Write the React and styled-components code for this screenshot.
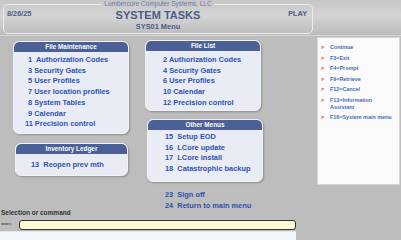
import React from "react";
import styled, { createGlobalStyle } from "styled-components";

const GlobalStyle = createGlobalStyle`
  html, body {
    margin: 0;
    padding: 0;
    background: #bdbdbd;
    font-family: "Liberation Sans", Arial, sans-serif;
  }
`;

const Page = styled.div`
  width: 401px;
  height: 240px;
  overflow: hidden;
  background: #bdbdbd;
  display: flex;
  flex-direction: column;
`;

const TopBand = styled.div`
  height: 36px;
  box-sizing: border-box;
  padding: 4px 88px 2px 3px;
  background: linear-gradient(#c6c6c6, #d4d4d4 45%, #bcbcbc);
  border-bottom: 1px solid #d6d6d6;
`;

const TitleBox = styled.div`
  height: 30px;
  box-sizing: border-box;
  border: 1px solid #ececec;
  border-radius: 5px;
  display: grid;
  grid-template-columns: 60px 1fr 60px;
  color: #4b5b8c;
`;

const DateText = styled.div`
  font-size: 7.3px;
  font-weight: bold;
  padding: 4px 0 0 3px;
`;

const PlayText = styled.div`
  font-size: 7.3px;
  font-weight: bold;
  text-align: right;
  padding: 4px 5px 0 0;
`;

const TitleCol = styled.div`
  display: flex;
  flex-direction: column;
  align-items: center;
`;

const Company = styled.div`
  font-size: 6.5px;
  line-height: 7px;
  margin-top: -5px;
  color: #6a78a8;
  background: linear-gradient(#c6c6c6, #cdcdcd);
  padding: 0 2px;
`;

const SysTitle = styled.div`
  font-size: 11px;
  font-weight: bold;
  line-height: 13px;
  margin-top: 2px;
`;

const SysSub = styled.div`
  font-size: 7.4px;
  font-weight: bold;
  line-height: 10px;
`;

const Main = styled.div`
  height: 172px;
  display: flex;
`;

const MenuArea = styled.div`
  width: 317px;
  display: grid;
  grid-template-columns: 116px 119px;
  column-gap: 16px;
  padding-left: 13px;
  box-sizing: border-box;
  align-items: start;
`;

const Column = styled.div`
  display: flex;
  flex-direction: column;
`;

const Panel = styled.div`
  margin-top: ${(p) => p.$top}px;
  margin-left: ${(p) => p.$left || 0}px;
  width: ${(p) => p.$width || 116}px;
  height: ${(p) => p.$height}px;
  box-sizing: border-box;
  background: #e9ecf4;
  border: 1px solid #f2f3f8;
  border-radius: 6px;
  box-shadow: 1px 1px 2px rgba(0, 0, 0, 0.25);
  overflow: hidden;
`;

const PanelHead = styled.div`
  height: 10px;
  background: #4a6096;
  color: #ffffff;
  font-size: 6.4px;
  font-weight: bold;
  text-align: center;
  line-height: 10px;
  border-radius: 5px 5px 0 0;
`;

const PanelBody = styled.div`
  padding: ${(p) => p.$pad || "3px 0 0 16px"};
  display: flex;
  flex-direction: column;
`;

const Item = styled.div`
  font-size: 7.4px;
  font-weight: bold;
  color: #2f52b2;
  line-height: 10.7px;
  white-space: pre;
  margin-left: ${(p) => p.$shift || 0}px;
`;

const Links = styled.div`
  margin: 8px 0 0 20px;
  display: flex;
  flex-direction: column;
`;

const Side = styled.div`
  margin-top: 1px;
  width: 83px;
  height: 148px;
  box-sizing: border-box;
  background: #fafafa;
  border: 1px solid #d6d6d6;
  padding: 6px 4px 0 3px;
  display: flex;
  flex-direction: column;
  gap: 3.5px;
`;

const KeyRow = styled.div`
  display: flex;
  font-size: 5.4px;
  font-weight: bold;
  color: #4a6bb8;
  line-height: 7px;
`;

const Arrow = styled.span`
  color: #d43030;
  width: 9px;
  flex: none;
`;

const Bottom = styled.div`
  display: flex;
  flex-direction: column;
`;

const Label = styled.div`
  font-size: 6.5px;
  font-weight: bold;
  color: #333333;
  line-height: 10px;
  padding-left: 1px;
`;

const CmdRow = styled.div`
  display: flex;
  align-items: center;
  height: 13px;
`;

const Prompt = styled.span`
  width: 19px;
  font-size: 4.5px;
  color: #333333;
  padding-left: 1px;
  box-sizing: border-box;
`;

const CmdInput = styled.div`
  width: 277px;
  height: 10px;
  box-sizing: border-box;
  background: #fffbd4;
  border: 1px solid #333333;
  border-radius: 3px;
`;

const MsgField = styled.div`
  width: 296px;
  height: 10px;
  background: #f3f7fc;
  border-top: 1px solid #dfe6ee;
`;

const fileMaint = [
  "1  Authorization Codes",
  "3 Security Gates",
  "5 User Profiles",
  "7 User location profiles",
  "8 System Tables",
  "9 Calendar",
  "11 Precision control",
];

const fileList = [
  "2 Authorization Codes",
  "4 Security Gates",
  "6 User Profiles",
  "10 Calendar",
  "12 Precision control",
];

const other = [
  "15  Setup EOD",
  "16  LCore update",
  "17  LCore install",
  "18  Catastrophic backup",
];

const keys = [
  "Continue",
  "F3=Exit",
  "F4=Prompt",
  "F9=Retrieve",
  "F12=Cancel",
  "F13=Information Assistant",
  "F16=System main menu",
];

const App = () => (
  <Page>
    <GlobalStyle />
    <TopBand>
      <TitleBox>
        <DateText>8/26/25</DateText>
        <TitleCol>
          <Company>Lumbercore Computer Systems, LLC</Company>
          <SysTitle>SYSTEM TASKS</SysTitle>
          <SysSub>SYS01 Menu</SysSub>
        </TitleCol>
        <PlayText>PLAY</PlayText>
      </TitleBox>
    </TopBand>
    <Main>
      <MenuArea>
        <Column>
          <Panel $top={5} $height={93}>
            <PanelHead>File Maintenance</PanelHead>
            <PanelBody $pad="3px 0 0 14px">
              {fileMaint.map((t, i) => (
                <Item key={t} $shift={i === 6 ? -3 : 0}>
                  {t}
                </Item>
              ))}
            </PanelBody>
          </Panel>
          <Panel $top={9} $left={2} $width={113} $height={33}>
            <PanelHead>Inventory Ledger</PanelHead>
            <PanelBody $pad="6px 0 0 15px">
              <Item>13  Reopen prev mth</Item>
            </PanelBody>
          </Panel>
        </Column>
        <Column>
          <Panel $top={4} $height={71}>
            <PanelHead>File List</PanelHead>
            <PanelBody $pad="4px 0 0 17px">
              {fileList.map((t) => (
                <Item key={t}>{t}</Item>
              ))}
            </PanelBody>
          </Panel>
          <Panel $top={8} $left={2} $height={63}>
            <PanelHead>Other Menus</PanelHead>
            <PanelBody $pad="2px 0 0 17px">
              {other.map((t) => (
                <Item key={t}>{t}</Item>
              ))}
            </PanelBody>
          </Panel>
          <Links>
            <Item>23  Sign off</Item>
            <Item>24  Return to main menu</Item>
          </Links>
        </Column>
      </MenuArea>
      <Side>
        {keys.map((k) => (
          <KeyRow key={k}>
            <Arrow>&gt;</Arrow>
            <span>{k}</span>
          </KeyRow>
        ))}
      </Side>
    </Main>
    <Bottom>
      <Label>Selection or command</Label>
      <CmdRow>
        <Prompt>===&gt;</Prompt>
        <CmdInput />
      </CmdRow>
      <MsgField />
    </Bottom>
  </Page>
);

export default App;
